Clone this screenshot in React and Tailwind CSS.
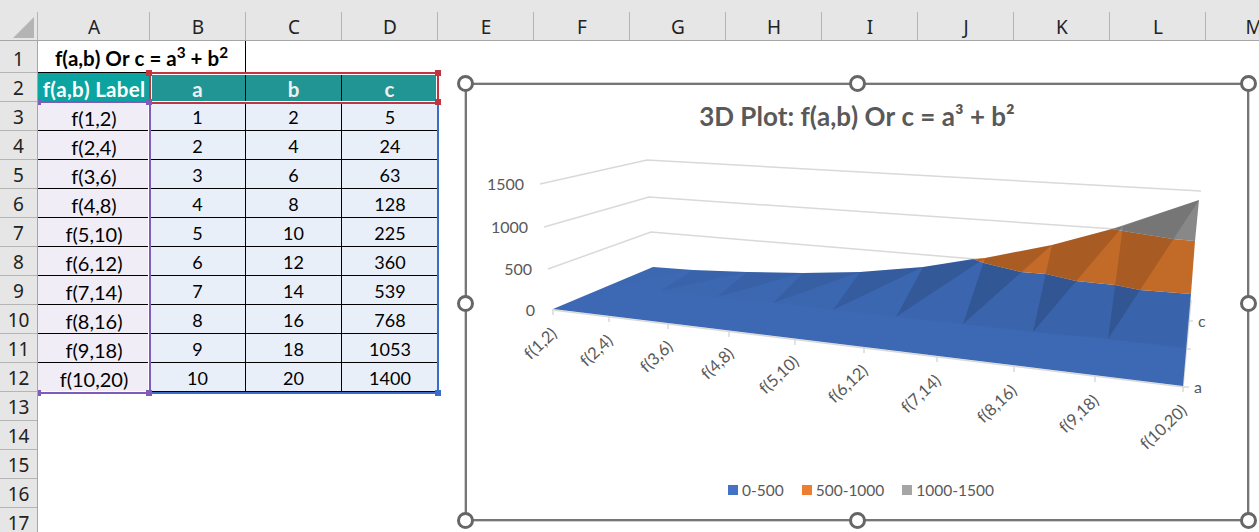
const COLS = ["A","B","C","D","E","F","G","H","I","J","K","L","M"];
const DATA = [
  ["f(1,2)",1,2,5],["f(2,4)",2,4,24],["f(3,6)",3,6,63],["f(4,8)",4,8,128],["f(5,10)",5,10,225],
  ["f(6,12)",6,12,360],["f(7,14)",7,14,539],["f(8,16)",8,16,768],["f(9,18)",9,18,1053],["f(10,20)",10,20,1400],
];
const MIDS = [[603,288],[660,291],[717,297],[773,303],[833,310],[896,317],[963,324],[1033,332],[1108,339],[1185,348]];
const TOPS = [[653,267],[693,270],[747,272],[803,273],[860,272],[923,267],[985,258],[1052,245],[1123,226],[1199,200]];
const TICKS = [[553,309],[609,316],[668,323],[729,331],[795,339],[864,347],[937,356],[1014,366],[1095,376],[1183,386]];
const LABELS = [[558,335],[614,342],[674,348],[735,355],[800,363],[869,372],[942,382],[1018,392],[1100,402],[1188,412]];
const DARK = [0.01,0.05,0.07,0.09,0.12,0.15,0.17,0.18,0.18];
const LIGHT = [0.0,0.01,0.01,0.02,0.02,0.03,0.04,0.05,0.05];
const pts = (a) => a.map((p) => p.join(",")).join(" ");

function Handle({ className }) {
  return <div className={`absolute w-[17px] h-[17px] rounded-full bg-white border-[3px] border-[#666666] ${className}`} />;
}
function Square({ className }) {
  return <div className={`absolute w-[6px] h-[6px] ${className}`} />;
}

function Surface() {
  return (
    <svg className="absolute inset-0 w-full h-full" viewBox="467 85 780 434">
      <g fill="none" stroke="#d9d9d9" strokeWidth="1.5">
        <polyline points="540,184 647,160 1201,191" />
        <polyline points="544,227 649,197 1115,229" />
        <polyline points="548,269 651,232 975,259" />
        <polyline points="553,310 1183,387 1191,300" />
        {TICKS.map((t, i) => (
          <line key={i} x1={t[0]} y1={t[1]} x2={t[0]} y2={t[1] + 6} />
        ))}
        <line x1="1183" y1="387" x2="1189" y2="387" />
        <line x1="1185" y1="349" x2="1191" y2="349" />
        <line x1="1188" y1="321" x2="1193" y2="321" />
      </g>
      <polygon
        fill="#3d69b4"
        points="553,309 653,267 693,270 747,272 803,273 860,272 923,267 973,259 984,263 1021,272 1046,274 1076,281 1115,285 1140,290 1191,294 1183,386"
      />
      <polygon
        fill="#cd702b"
        points="973,259 985,258 1052,245 1112,229 1123,231 1173,239 1195,241 1191,294 1140,290 1115,285 1076,281 1046,274 1021,272 984,263"
      />
      <polygon fill="#909090" points="1112,229 1199,200 1195,241 1173,239 1123,231" />
      {MIDS.slice(0, -1).map((m, i) => (
        <g key={i}>
          <polygon fill="#000" fillOpacity={DARK[i]} points={pts([m, TOPS[i], TOPS[i + 1]])} />
          <polygon fill="#000" fillOpacity={LIGHT[i]} points={pts([m, TOPS[i + 1], MIDS[i + 1]])} />
        </g>
      ))}
      <g fill="#595959" fontSize="16" textAnchor="end">
        <text x="524" y="190">1500</text>
        <text x="528" y="233">1000</text>
        <text x="532" y="275">500</text>
        <text x="535" y="316">0</text>
      </g>
      <text x="1198" y="327" fill="#595959" fontSize="16">c</text>
      <text x="1194" y="393" fill="#595959" fontSize="16">a</text>
      <g fill="#595959" fontSize="16.5" textAnchor="end">
        {DATA.map((r, i) => (
          <text key={r[0]} transform={`translate(${LABELS[i][0]} ${LABELS[i][1]}) rotate(-43)`}>{r[0]}</text>
        ))}
      </g>
    </svg>
  );
}

function Chart() {
  return (
    <div className="absolute left-[465px] top-[83px] w-[784px] h-[438px] bg-white border-2 border-[#767676] shadow-[0_0_0_1px_#d0d0d0] flex flex-col items-center">
      <Surface />
      <div className="relative mt-[13px] text-[26px] leading-[36px] font-bold text-[#595959]">3D Plot: f(a,b) Or c = a³ + b²</div>
      <div className="relative mt-auto mb-[19px] ml-[8px] flex items-center text-[15.5px] leading-[20px] text-[#595959]">
        <span className="w-[10px] h-[10px] bg-[#4472c4] mr-[4px]" />
        <span className="mr-[18px]">0-500</span>
        <span className="w-[10px] h-[10px] bg-[#ed7d31] mr-[4px]" />
        <span className="mr-[18px]">500-1000</span>
        <span className="w-[10px] h-[10px] bg-[#a5a5a5] mr-[4px]" />
        <span>1000-1500</span>
      </div>
      <Handle className="-left-[10px] -top-[10px]" />
      <Handle className="left-[382px] -top-[10px]" />
      <Handle className="-right-[10px] -top-[10px]" />
      <Handle className="-left-[10px] top-[210px]" />
      <Handle className="-right-[10px] top-[210px]" />
      <Handle className="-left-[10px] -bottom-[10px]" />
      <Handle className="left-[382px] -bottom-[10px]" />
      <Handle className="-right-[10px] -bottom-[10px]" />
    </div>
  );
}

function Selections() {
  return (
    <>
      <div className="absolute left-[38px] top-[101px] w-[113px] h-[293px] border-b-2 border-r-2 border-t-2 border-[#7f5cb8] shadow-[inset_-1px_0_0_#ffffff,inset_0_-1px_0_#ffffff]" />
      <Square className="left-[38px] top-[99px] !w-[3px] bg-[#7f5cb8]" />
      <Square className="left-[38px] top-[390px] !w-[3px] bg-[#7f5cb8]" />
      <div className="absolute left-[150px] top-[102px] w-[289px] h-[292px] border-r-2 border-b-2 border-[#3a6dc8]" />
      <div className="absolute left-[149px] top-[72px] w-[290px] h-[32px] border-2 border-[#c0353f] shadow-[inset_0_0_0_1px_#ffffff]" />
      <Square className="left-[146px] top-[70px] bg-[#c0353f]" />
      <Square className="left-[435px] top-[70px] bg-[#c0353f]" />
      <Square className="left-[435px] top-[99px] bg-[#c0353f]" />
      <Square className="left-[146px] top-[99px] bg-[#7f5cb8]" />
      <Square className="left-[146px] top-[390px] bg-[#7f5cb8]" />
      <Square className="left-[435px] top-[390px] bg-[#3a6dc8]" />
    </>
  );
}

export default function App() {
  const rowNums = Array.from({ length: 17 }, (_, i) => i + 1);
  return (
    <div className="relative w-[1259px] h-[532px] overflow-hidden bg-white font-['Lato',sans-serif] text-black [font-kerning:none]">
      <div className="flex h-[41px] bg-[#e6e6e6] border-b border-[#a6a6a6] font-['Noto_Sans',sans-serif] text-[19px] text-[#222222]">
        <div className="relative w-[38px] shrink-0 border-r border-[#b5b5b5] mt-[12px]">
          <div className="absolute left-[13px] top-[5px] w-0 h-0 border-l-[21px] border-l-transparent border-b-[21px] border-b-[#b4b4b4]" />
        </div>
        <div className="w-[112px] shrink-0 mt-[12px] pl-px border-r border-[#b5b5b5] text-center leading-[30px]">A</div>
        {COLS.slice(1).map((c) => (
          <div key={c} className="w-[96px] shrink-0 mt-[12px] pl-px border-r border-[#b5b5b5] text-center leading-[30px]">{c}</div>
        ))}
      </div>
      <div className="flex">
        <div className="w-[38px] shrink-0 bg-[#e6e6e6] border-r border-[#a6a6a6] font-['Noto_Sans',sans-serif] text-[19px] text-[#222222]">
          {rowNums.map((n) => (
            <div key={n} className={`flex items-center justify-center border-b border-[#b5b5b5] ${n === 1 ? "h-[32px] pt-[6px]" : "h-[29px] pt-[3px]"}`}>{n}</div>
          ))}
        </div>
        <div className="relative flex-1 text-[18px]">
          <div className="grid grid-cols-[112px_96px_96px_96px] w-[400px]">
            <div className="col-span-2 h-[32px] pt-[3px] flex items-center justify-center font-bold text-[20.5px] border-r border-b border-black">
              <span>f(a,b) Or c = a<sup>3</sup> + b<sup>2</sup></span>
            </div>
            <div className="col-span-2" />
            <div className="h-[29px] pt-[3px] flex items-center justify-center font-bold text-[20.5px] tracking-[0.3px] text-white bg-[#0ba4a0] whitespace-nowrap">f(a,b) Label</div>
            {["a","b","c"].map((h) => (
              <div key={h} className="h-[29px] pt-[3px] flex items-center justify-center font-bold text-[20.5px] text-[#f0f0f0] bg-[#219594] border-r border-black">{h}</div>
            ))}
            {DATA.map((r) => (
              <div key={r[0]} className="contents">
                <div className="h-[29px] pt-[3px] flex items-center justify-center text-[20px] bg-[#f0edf7] border-b border-black">{r[0]}</div>
                <div className="h-[29px] pt-[3px] flex items-center justify-center bg-[#e9eff9] border-b border-r border-black">{r[1]}</div>
                <div className="h-[29px] pt-[3px] flex items-center justify-center bg-[#e9eff9] border-b border-r border-black">{r[2]}</div>
                <div className="h-[29px] pt-[3px] flex items-center justify-center bg-[#e9eff9] border-b border-black">{r[3]}</div>
              </div>
            ))}
          </div>
        </div>
      </div>
      <Selections />
      <Chart />
    </div>
  );
}
